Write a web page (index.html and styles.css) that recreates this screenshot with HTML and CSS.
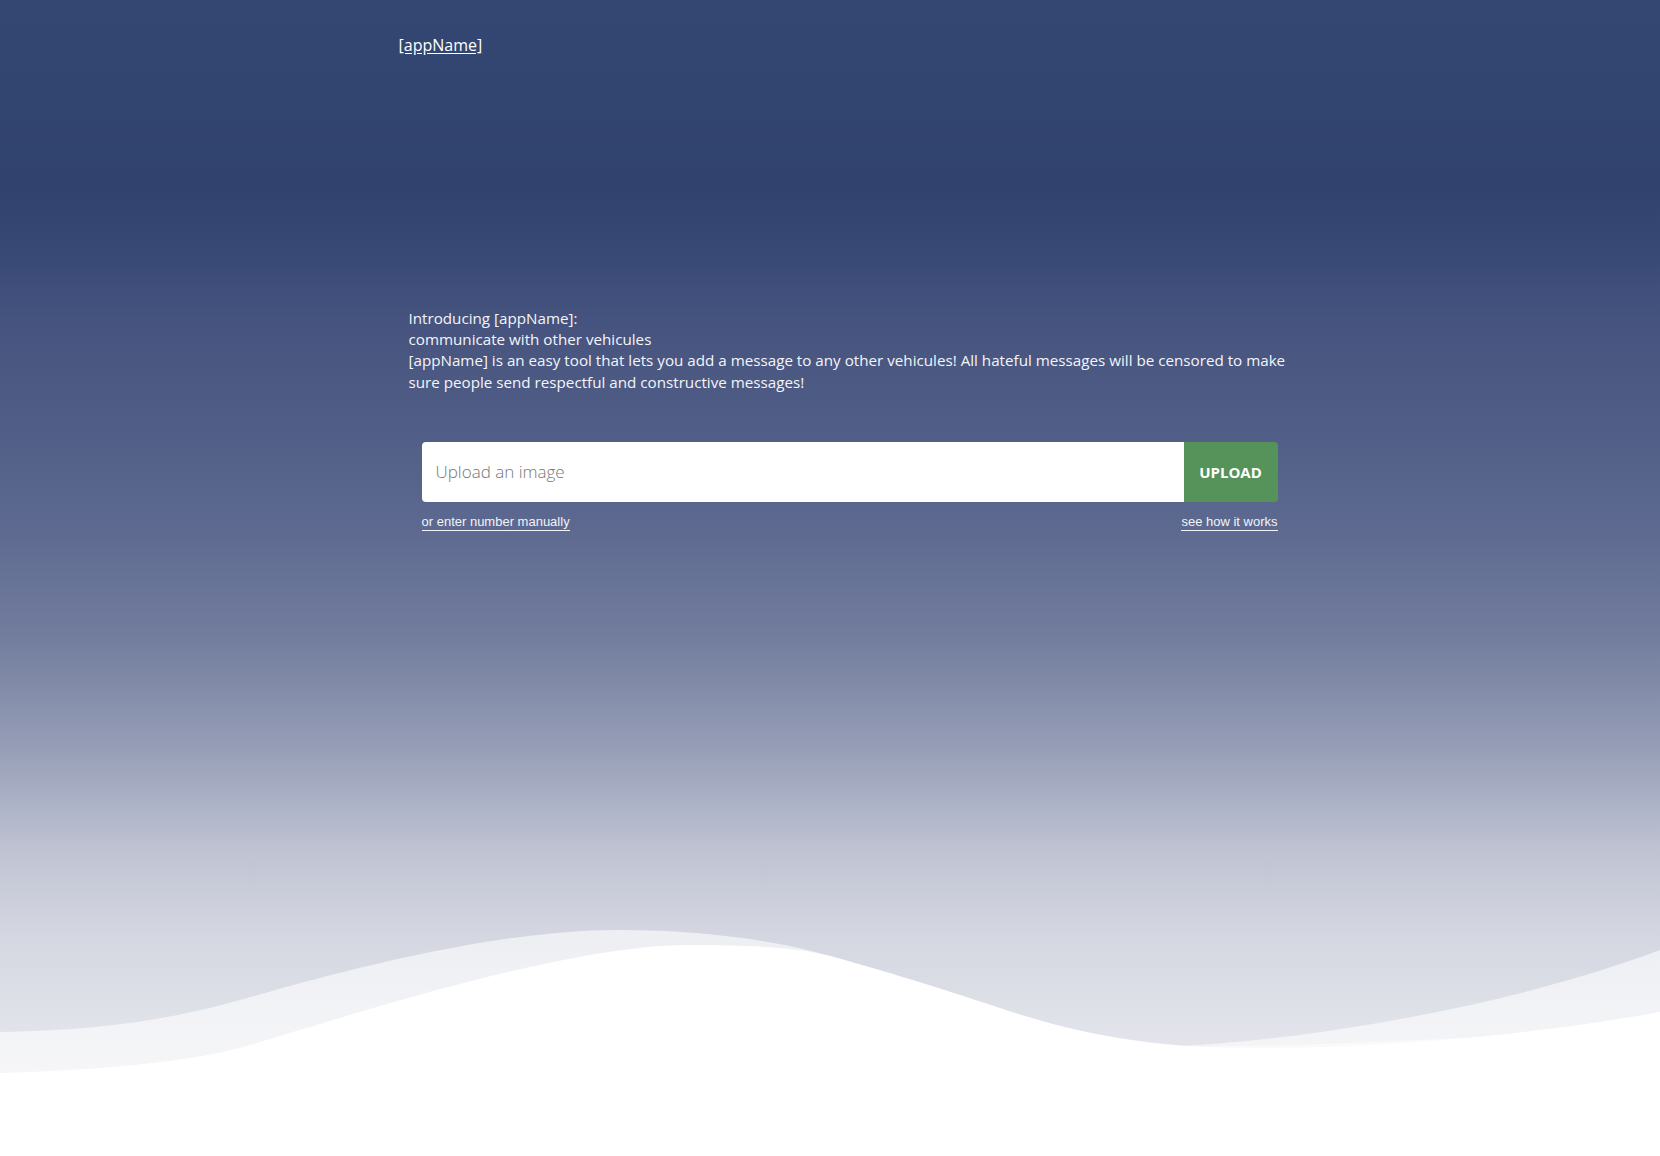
FILE: index.html
```html
<!DOCTYPE html>
<html lang="en">
<head>
<meta charset="utf-8">
<title>[appName]</title>
<link rel="stylesheet" href="styles.css">
</head>
<body>
<div class="page">
  <header class="container header">
    <a class="logo" href="#">[appName]</a>
  </header>
  <main class="container main">
    <section class="intro">
      <p>Introducing [appName]:<br>communicate with other vehicules<br>[appName] is an easy tool that lets you add a message to any other vehicules! All hateful messages will be censored to make sure people send respectful and constructive messages!</p>
    </section>
    <form class="upload" onsubmit="return false;">
      <div class="field">
        <input class="field-input" type="text" placeholder="Upload an image">
        <button class="field-button" type="button">UPLOAD</button>
      </div>
      <div class="links">
        <a class="small-link" href="#">or enter number manually</a>
        <a class="small-link" href="#">see how it works</a>
      </div>
    </form>
  </main>
  <svg class="waves" viewBox="0 900 1660 256" preserveAspectRatio="none" width="1660" height="256" aria-hidden="true">
    <path class="wave-back" d="M0,1032 C130,1030 200,1012 265,993 C400,955 520,930 619,930 C720,930 800,945 850,962 L1000,1080 L1180,1046 C1300,1040 1500,1010 1660,950 L1660,1156 L0,1156 Z"/>
    <path class="wave-mid" d="M0,1100 C300,1090 500,1050 700,1045 C900,1040 1100,1050 1300,1045 C1450,1040 1560,1030 1660,1036 L1660,1156 L0,1156 Z"/>
    <path class="wave-front" d="M0,1073 C100,1070 190,1062 243,1047 C330,1022 560,945 688,945 C760,945 800,948 830,956 C900,975 960,995 1000,1008 C1080,1035 1150,1046 1230,1048 C1400,1050 1560,1030 1660,1012 L1660,1156 L0,1156 Z"/>
  </svg>
</div>
</body>
</html>
```
FILE: styles.css
```css
html, body {
  margin: 0;
  padding: 0;
}

body {
  font-family: "Segoe UI", "Open Sans", "Noto Sans", sans-serif;
  color: #f2f3f7;
  background: #ffffff;
}

.page {
  position: relative;
  min-height: 1156px;
  padding-left: 39px;
  box-sizing: border-box;
  overflow: hidden;
  background: linear-gradient(to bottom,
    #344773 0px,
    #30426d 190px,
    #3a4a77 260px,
    #45537e 320px,
    #56638b 480px,
    #5f6b91 540px,
    #737e9e 640px,
    #959db6 745px,
    #bfc3d2 850px,
    #d3d6e0 930px,
    #e6e7ed 1060px,
    #eeeff3 1156px);
}

.container {
  width: 902px;
  margin: 0 auto;
  position: relative;
  z-index: 1;
}

.header {
  padding-top: 33px;
  height: 40px;
}

.logo {
  font-size: 16px;
  line-height: 24px;
  color: #ffffff;
  text-decoration: underline;
  text-underline-offset: 2px;
}

.main {
  padding-top: 235px;
}

.intro {
  padding: 0 10px;
}

.intro p {
  margin: 0;
  font-size: 15.2px;
  line-height: 21.2px;
  color: #f4f5f8;
}

.upload {
  margin: 49px 23px 0 23px;
}

.field {
  display: flex;
  height: 60px;
}

.field-input {
  flex: 1;
  min-width: 0;
  border: none;
  outline: none;
  margin: 0;
  padding: 0 14px;
  background: #ffffff;
  border-radius: 4px 0 0 4px;
  font-family: "Segoe UI", "Open Sans", sans-serif;
  font-weight: 300;
  font-size: 17px;
  color: #333;
}

.field-input::placeholder {
  color: #767676;
  font-weight: 300;
}

.field-button {
  width: 94px;
  border: none;
  margin: 0;
  padding: 0;
  background: #56935b;
  color: #ffffff;
  border-radius: 0 4px 4px 0;
  font-family: "Segoe UI", "Open Sans", sans-serif;
  font-weight: 700;
  font-size: 15px;
  cursor: pointer;
}

.links {
  display: flex;
  justify-content: space-between;
  align-items: flex-start;
  padding-top: 13px;
}

.small-link {
  display: inline-block;
  font-family: "Liberation Sans", Arial, sans-serif;
  font-size: 13px;
  line-height: 14px;
  padding-bottom: 1px;
  color: #f2f3f7;
  text-decoration: none;
  border-bottom: 1px solid #f2f3f7;
}

.waves {
  position: absolute;
  left: 0;
  bottom: 0;
  display: block;
  width: 1660px;
  height: 256px;
}

.wave-back {
  fill: #ffffff;
  fill-opacity: 0.6;
}

.wave-mid {
  fill: #ffffff;
  fill-opacity: 0.5;
}

.wave-front {
  fill: #ffffff;
}
```
